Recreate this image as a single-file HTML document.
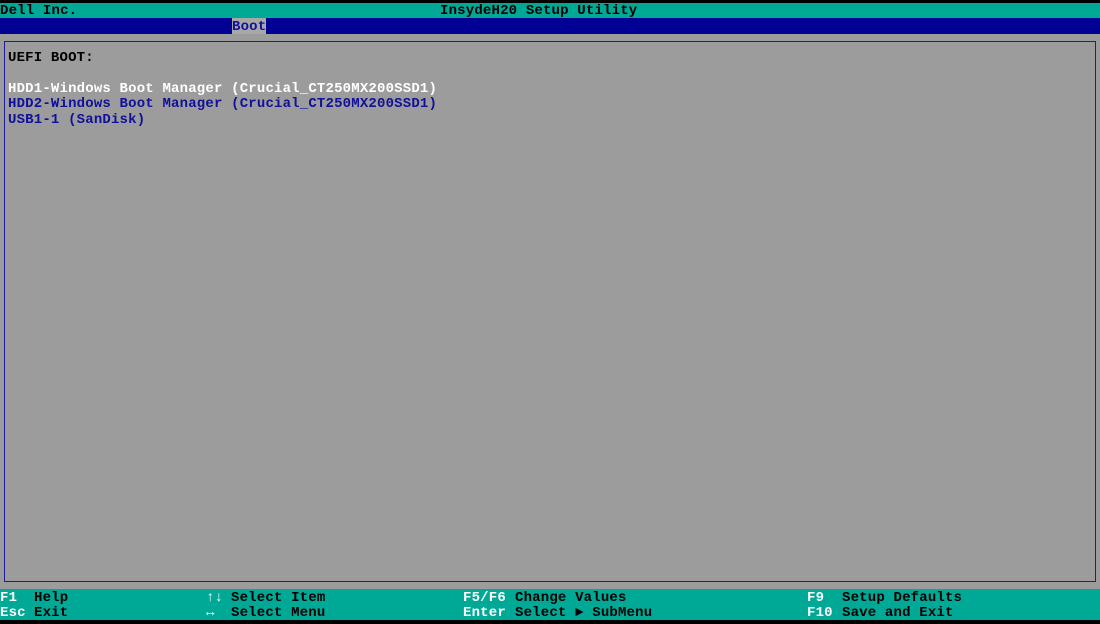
<!DOCTYPE html>
<html><head><meta charset="utf-8"><style>
html,body{margin:0;padding:0}
body{width:1100px;height:624px;background:#9c9c9c;position:relative;overflow:hidden;font-family:"Liberation Mono","DejaVu Sans Mono",monospace;font-weight:bold;font-size:14px;letter-spacing:0.18px}
.a{position:absolute;white-space:pre;line-height:15px}
</style></head><body>
<div class="a" style="left:0;top:0;width:1100px;height:3px;background:#000"></div>
<div class="a" style="left:0;top:3px;width:1100px;height:15px;background:#00a896"></div>
<div class="a" style="left:0;top:18px;width:1100px;height:16px;background:#000094"></div>
<div class="a" style="left:232px;top:18px;width:34px;height:16px;background:#a8a8a8"></div>
<div class="a" style="left:0;top:4px;color:#000">Dell Inc.</div>
<div class="a" style="left:440px;top:4px;color:#000">InsydeH20 Setup Utility</div>
<div class="a" style="left:232px;top:20px;color:#10109a">Boot</div>
<div class="a" style="left:4px;top:41px;width:1090px;height:539px;border:1px solid #1c1c9c"></div>
<div class="a" style="left:8px;top:51px;color:#000">UEFI BOOT:</div>
<div class="a" style="left:8px;top:82px;color:#fff">HDD1-Windows Boot Manager (Crucial_CT250MX200SSD1)</div>
<div class="a" style="left:8px;top:97px;color:#10109a">HDD2-Windows Boot Manager (Crucial_CT250MX200SSD1)</div>
<div class="a" style="left:8px;top:113px;color:#10109a">USB1-1 (SanDisk)</div>
<div class="a" style="left:0;top:589px;width:1100px;height:31px;background:#00a896"></div>
<div class="a" style="left:0;top:620px;width:1100px;height:4px;background:#000"></div>
<div class="a" style="left:0;top:591px;color:#fff">F1</div>
<div class="a" style="left:34px;top:591px;color:#000">Help</div>
<div class="a" style="left:0;top:606px;color:#fff">Esc</div>
<div class="a" style="left:34px;top:606px;color:#000">Exit</div>
<div class="a" style="left:206px;top:591px;color:#fff">↑↓</div>
<div class="a" style="left:231px;top:591px;color:#000">Select Item</div>
<div class="a" style="left:206px;top:606px;color:#fff">↔</div>
<div class="a" style="left:231px;top:606px;color:#000">Select Menu</div>
<div class="a" style="left:463px;top:591px;color:#fff">F5/F6</div>
<div class="a" style="left:515px;top:591px;color:#000">Change Values</div>
<div class="a" style="left:463px;top:606px;color:#fff">Enter</div>
<div class="a" style="left:515px;top:606px;color:#000">Select ► SubMenu</div>
<div class="a" style="left:807px;top:591px;color:#fff">F9</div>
<div class="a" style="left:842px;top:591px;color:#000">Setup Defaults</div>
<div class="a" style="left:807px;top:606px;color:#fff">F10</div>
<div class="a" style="left:842px;top:606px;color:#000">Save and Exit</div>
</body></html>
